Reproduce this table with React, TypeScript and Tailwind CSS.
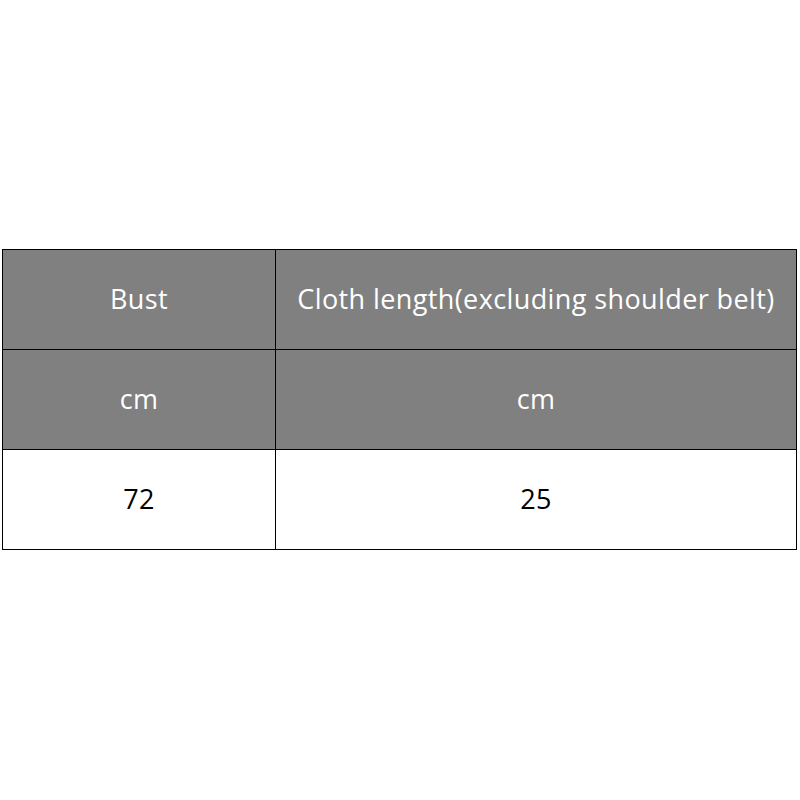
import React from 'react';

const rows = [
  { cells: ['Bust', 'Cloth length(excluding shoulder belt)'], head: true },
  { cells: ['cm', 'cm'], head: true },
  { cells: ['72', '25'], head: false },
];

export default function App() {
  return (
    <div className="w-[800px] h-[800px] bg-white pt-[249px] pl-[2px]" style={{ fontFamily: '"Open Sans", "Noto Sans", sans-serif' }}>
      <div className="w-[795px] border-l border-t border-black">
        {rows.map((row, i) => (
          <div key={i} className={`grid grid-cols-[273px_521px] ${row.head ? 'bg-[#808080] text-white' : 'bg-white text-black'}`}>
            {row.cells.map((c, j) => (
              <div key={j} className="h-[100px] border-r border-b border-black flex items-center justify-center text-[27px] tracking-[0.4px]">
                {c}
              </div>
            ))}
          </div>
        ))}
      </div>
    </div>
  );
}
